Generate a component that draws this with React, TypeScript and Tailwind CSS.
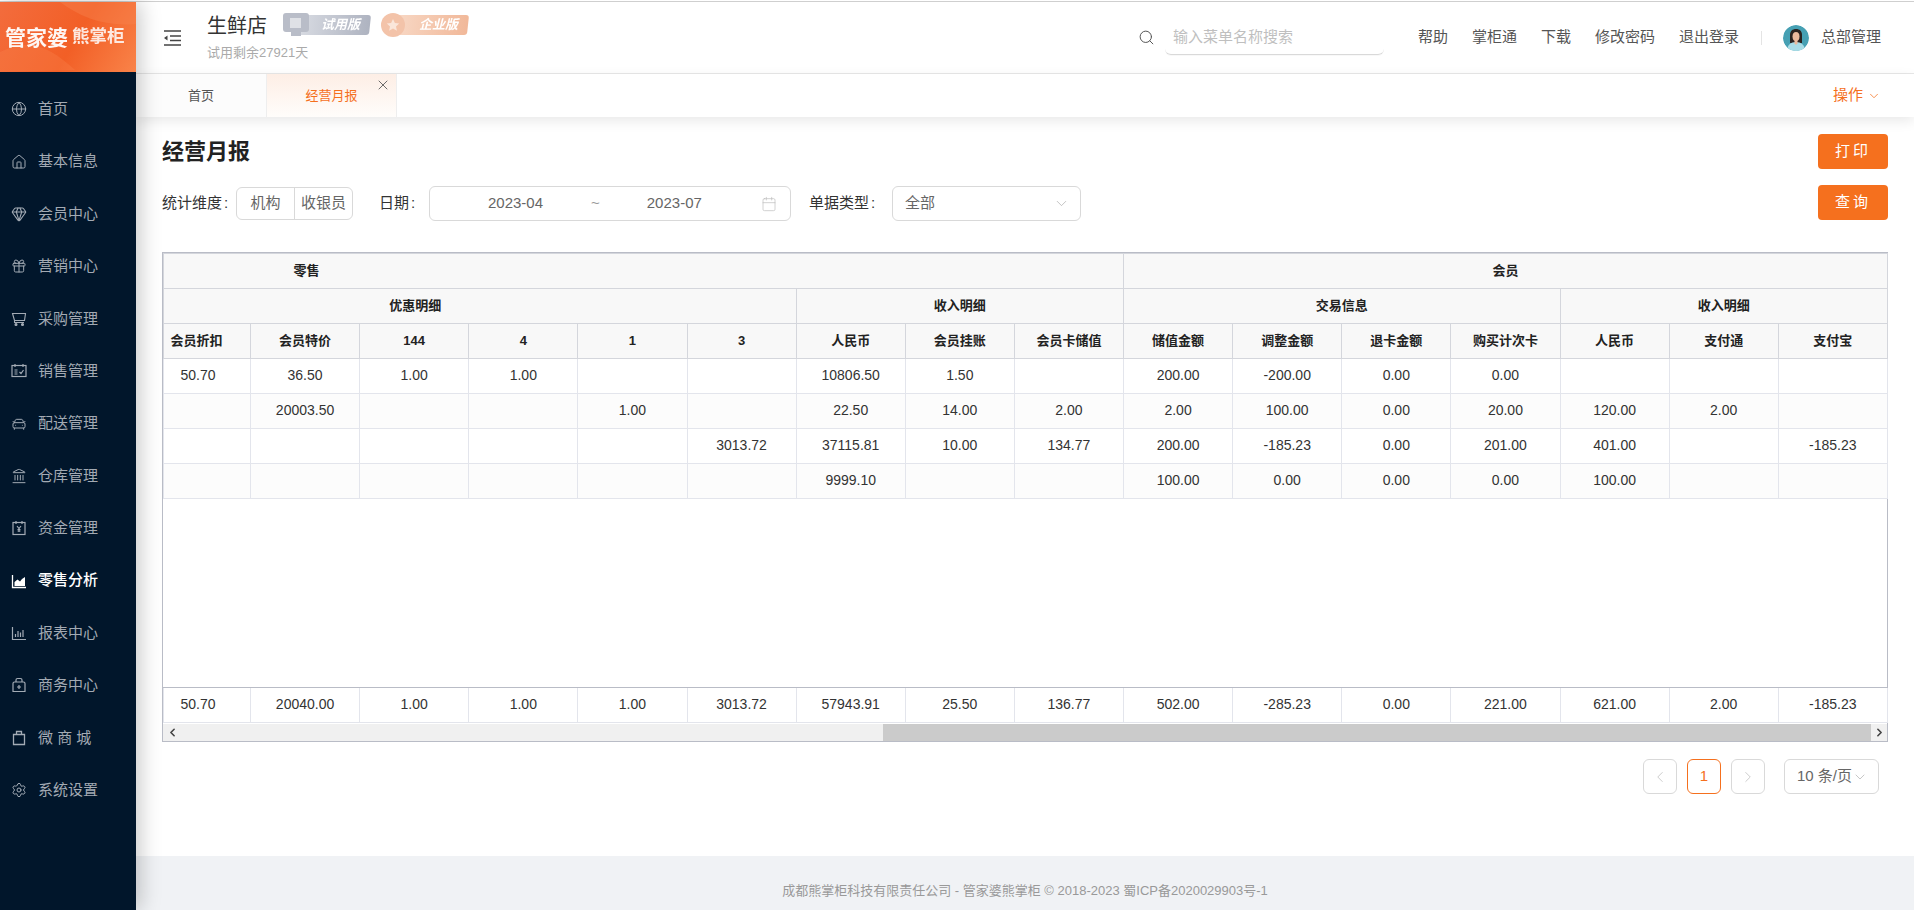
import { Calendar, CarFront, ChevronDown, ChevronLeft, ChevronRight, Gem, Gift, Globe, House, Landmark, Search, Settings, X } from 'lucide-react'
import type { ReactNode } from 'react'

const FONT = 'font-["Liberation_Sans","Noto_Sans_CJK_SC",sans-serif]'

function CartIcon() {
  return (
    <svg width="16" height="16" viewBox="0 0 16 16" fill="none" stroke="currentColor" strokeWidth="1.100">
      <path d="M1.500 2.500h13l-1 7h-10zM3.500 9.500v2h9.500" />
      <circle cx="5" cy="13.500" r="1" fill="currentColor" />
      <circle cx="11.500" cy="13.500" r="1" fill="currentColor" />
    </svg>
  )
}

function SalesIcon() {
  return (
    <svg width="16" height="16" viewBox="0 0 16 16" fill="none" stroke="currentColor" strokeWidth="1.200">
      <rect x="1" y="2.500" width="14" height="11" />
      <path d="M4 1v3M12 1v3M3.500 7h3M3.500 9h3M3.500 11h3M8.500 9l1.500 1.500L12.500 7" />
    </svg>
  )
}

function FundIcon() {
  return (
    <svg width="16" height="16" viewBox="0 0 16 16" fill="none" stroke="currentColor" strokeWidth="1.200">
      <rect x="2" y="2.500" width="12" height="12" />
      <path d="M5 1v3M11 1v3M6 6l2 2.500L10 6M8 8.500V12M6.500 9.500h3M6.500 11h3" />
    </svg>
  )
}

function AreaIcon() {
  return (
    <svg width="16" height="16" viewBox="0 0 16 16" fill="none">
      <path d="M1.500 2v12.500H15" stroke="currentColor" strokeWidth="1.300" />
      <path d="M3.500 13V9l3-2.500 2.500 2 2-2.500 3-2V13z" fill="currentColor" />
    </svg>
  )
}

function BarsIcon() {
  return (
    <svg width="16" height="16" viewBox="0 0 16 16" fill="none" stroke="currentColor" strokeWidth="1.200">
      <path d="M1.500 2v12.500H15M4.500 12V9M7 12V6M9.500 12V7.500M12 12V5" />
    </svg>
  )
}

function BusinessIcon() {
  return (
    <svg width="16" height="16" viewBox="0 0 16 16" fill="none" stroke="currentColor" strokeWidth="1.200">
      <path d="M2 6.500c0-1 .5-1.500 1.500-1.500h9c1 0 1.500.5 1.500 1.500V14.500H2zM5 5V3c0-.8.5-1.500 1.500-1.500h3c1 0 1.500.7 1.500 1.500v2M8 8v4M6 10h4" />
    </svg>
  )
}

function BagIcon() {
  return (
    <svg width="16" height="16" viewBox="0 0 16 16" fill="none" stroke="currentColor" strokeWidth="1.300">
      <path d="M2.500 4.500h11v10h-11zM5.500 4.500V1.500h5v3" />
    </svg>
  )
}

const menu: { label: string; icon: ReactNode; active?: boolean }[] = [
  { label: '首页', icon: <Globe size={16} strokeWidth={1.5} /> },
  { label: '基本信息', icon: <House size={16} strokeWidth={1.5} /> },
  { label: '会员中心', icon: <Gem size={16} strokeWidth={1.6} /> },
  { label: '营销中心', icon: <Gift size={16} strokeWidth={1.5} /> },
  { label: '采购管理', icon: <CartIcon /> },
  { label: '销售管理', icon: <SalesIcon /> },
  { label: '配送管理', icon: <CarFront size={16} strokeWidth={1.5} /> },
  { label: '仓库管理', icon: <Landmark size={16} strokeWidth={1.5} /> },
  { label: '资金管理', icon: <FundIcon /> },
  { label: '零售分析', icon: <AreaIcon />, active: true },
  { label: '报表中心', icon: <BarsIcon /> },
  { label: '商务中心', icon: <BusinessIcon /> },
  { label: '微 商 城', icon: <BagIcon /> },
  { label: '系统设置', icon: <Settings size={16} strokeWidth={1.5} /> },
]

const links = ['帮助', '掌柜通', '下载', '修改密码', '退出登录']

const subHeads = ['会员折扣', '会员特价', '144', '4', '1', '3', '人民币', '会员挂账', '会员卡储值', '储值金额', '调整金额', '退卡金额', '购买计次卡', '人民币', '支付通', '支付宝']

const rows = [
  ['50.70', '36.50', '1.00', '1.00', '', '', '10806.50', '1.50', '', '200.00', '-200.00', '0.00', '0.00', '', '', ''],
  ['', '20003.50', '', '', '1.00', '', '22.50', '14.00', '2.00', '2.00', '100.00', '0.00', '20.00', '120.00', '2.00', ''],
  ['', '', '', '', '', '3013.72', '37115.81', '10.00', '134.77', '200.00', '-185.23', '0.00', '201.00', '401.00', '', '-185.23'],
  ['', '', '', '', '', '', '9999.10', '', '', '100.00', '0.00', '0.00', '0.00', '100.00', '', ''],
]

const totals = ['50.70', '20040.00', '1.00', '1.00', '1.00', '3013.72', '57943.91', '25.50', '136.77', '502.00', '-285.23', '0.00', '221.00', '621.00', '2.00', '-185.23']

function Logo() {
  return (
    <div className="relative flex h-[70px] items-center overflow-hidden bg-[linear-gradient(120deg,#f36c3d,#f25f26_55%,#f98349)] pl-[5px] text-white">
      <svg className="absolute inset-0" width="136" height="70" viewBox="0 0 136 70" fill="none">
        <path d="M0 50C30 35 50 45 75 68L0 70z" fill="#f8814a" fillOpacity="0.35" />
        <path d="M60 0c20 15 45 25 76 22V0z" fill="#f88550" fillOpacity="0.4" />
      </svg>
      <span className="relative whitespace-nowrap text-[21px] leading-none font-bold opacity-95 blur-[0.3px]">管家婆</span>
      <span className="relative ml-[4px] whitespace-nowrap text-[17.500px] leading-none font-bold opacity-85 blur-[0.3px]">熊掌柜</span>
    </div>
  )
}

function Sidebar() {
  return (
    <aside className="relative z-20 w-[136px] shrink-0 bg-[#01162b] shadow-[4px_0_20px_rgba(0,0,0,0.22)]">
      <Logo />
      <nav className="pt-[11px]">
        {menu.map((m) => (
          <div key={m.label} className={`flex h-[52.400px] items-center gap-[11px] pl-[11px] text-[15px] ${m.active ? 'font-medium text-white' : 'text-[#a3aab3]'}`}>
            <span className={m.active ? 'text-white' : 'text-[#a3abb5]'}>{m.icon}</span>
            <span className="whitespace-pre">{m.label}</span>
          </div>
        ))}
      </nav>
    </aside>
  )
}

function Badge({ label, tone, icon }: { label: string; tone: string; icon: ReactNode }) {
  return (
    <div className="relative flex h-[24px] w-[87px] items-center blur-[0.6px]">
      <div className={`ml-[14px] flex h-[20px] w-[73px] -skew-x-6 items-center justify-center rounded-[3px] pl-[14px] text-[13px] font-bold text-white italic ${tone}`}>
        <span className="skew-x-6">{label}</span>
      </div>
      <div className="absolute top-0 left-0">{icon}</div>
    </div>
  )
}

function Avatar() {
  return (
    <svg width="26" height="26" viewBox="0 0 26 26" className="rounded-full">
      <circle cx="13" cy="13" r="13" fill="#46a0b3" />
      <path d="M7 18V10c0-4 2.500-6 6-6s6 2 6 6v8z" fill="#2b2320" />
      <ellipse cx="13" cy="11.500" rx="3.500" ry="4.500" fill="#eab99c" />
      <path d="M4 26c0-6 4-9 9-9s9 3 9 9z" fill="#a9dce6" />
      <path d="M11.500 15h3v3.500L13 20l-1.500-1.500z" fill="#eab99c" />
    </svg>
  )
}

function TopBar() {
  return (
    <header className="flex h-[72px] shrink-0 items-center border-b border-[#e8e8e8] bg-white pl-[27px]">
      <svg width="18" height="16" viewBox="0 0 18 16" fill="none" stroke="#444" strokeWidth="1.300">
        <path d="M1 1h17M7 6h11M7 10.500h11M1 15h17" />
        <path d="M4.500 5.500v5L1 8z" fill="#444" stroke="none" />
      </svg>
      <div className="ml-[26px] w-[76px] self-start pt-[12px]">
        <div className="whitespace-nowrap text-[20px] leading-[24px] text-[#333]">生鲜店</div>
        <div className="mt-[7px] whitespace-nowrap text-[13px] leading-[16px] text-[#aaa]">试用剩余27921天</div>
      </div>
      <div className="mb-[26px] flex gap-[11px]">
        <Badge
          label="试用版"
          tone="bg-[linear-gradient(90deg,#d9dce3,#aeb3c0)]"
          icon={
            <svg width="28" height="24" viewBox="0 0 28 24">
              <rect x="0" y="0" width="26" height="19" rx="3" fill="#b9bdc8" />
              <rect x="7" y="5" width="11" height="10" fill="#dfe1e6" />
              <rect x="8" y="19" width="10" height="4" fill="#b9bdc8" />
            </svg>
          }
        />
        <Badge
          label="企业版"
          tone="bg-[linear-gradient(90deg,#f8d8c5,#f1b899)]"
          icon={
            <svg width="24" height="24" viewBox="0 0 24 24">
              <circle cx="12" cy="12" r="12" fill="#f3c3a9" />
              <path d="M12 6l1.900 4 4.300.5-3.200 3 .9 4.300-3.900-2.200-3.900 2.200.9-4.300-3.200-3 4.300-.5z" fill="#fae6da" />
            </svg>
          }
        />
      </div>
      <div className="ml-auto flex items-center pr-[33px]">
        <Search size={17} strokeWidth={1.4} className="text-[#555]" />
        <div className="ml-[10px] flex h-[34px] w-[219px] items-center rounded-b-[6px] border-b border-[#d9d9d9] pl-[8px] text-[15px] text-[#bfbfbf] shadow-[0_1px_1px_rgba(0,0,0,0.03)]">
          输入菜单名称搜索
        </div>
        <div className="ml-[34px] flex gap-[24px] text-[15px] text-[#555]">
          {links.map((l) => (
            <span key={l} className="whitespace-nowrap">{l}</span>
          ))}
        </div>
        <div className="mr-[21px] ml-[22px] h-[14px] w-px bg-[#e4e4e4]" />
        <Avatar />
        <span className="ml-[12px] whitespace-nowrap text-[15px] text-[#555]">总部管理</span>
      </div>
    </header>
  )
}

function TabBar() {
  return (
    <div className="relative z-10 flex h-[43px] shrink-0 items-stretch bg-white shadow-[0_4px_12px_rgba(0,0,0,0.09)]">
      <div className="flex w-[131px] items-center justify-center border-r border-[#eee] bg-[#fcfcfc] text-[13px] text-[#555]">首页</div>
      <div className="relative flex w-[130px] items-center justify-center border-r border-[#eee] bg-[linear-gradient(180deg,#fdeee5,#fffdfb)] text-[13px] text-[#f5701e]">
        经营月报
        <X size={16} strokeWidth={1.3} className="absolute top-[3px] right-[5px] text-[#555]" />
      </div>
      <div className="ml-auto flex items-center gap-[4px] pr-[33px] text-[15px] text-[#f5701e]">
        操作
        <ChevronDown size={14} strokeWidth={1.3} />
      </div>
    </div>
  )
}

function Filters() {
  return (
    <div className="mt-[17px] flex h-[35px] items-center text-[15px] text-[#333]">
      <span className="w-[74px] whitespace-nowrap">统计维度<span className="ml-[2px]">:</span></span>
      <div className="flex h-[33px] w-[117px] rounded-[6px] border border-[#d9d9d9] text-[#666]">
        <span className="flex w-[58px] items-center justify-center border-r border-[#d9d9d9]">机构</span>
        <span className="flex flex-1 items-center justify-center whitespace-nowrap">收银员</span>
      </div>
      <span className="ml-[26px] w-[50px] whitespace-nowrap">日期<span className="ml-[2px]">:</span></span>
      <div className="flex h-[35px] w-[362px] items-center rounded-[6px] border border-[#d9d9d9] text-[#666]">
        <span className="ml-[58px] w-[56px]">2023-04</span>
        <span className="ml-[47px] text-[#999]">~</span>
        <span className="ml-[47px] w-[56px]">2023-07</span>
        <Calendar size={16} strokeWidth={1} className="ml-[58px] text-[#bbb]" />
      </div>
      <span className="ml-[18px] w-[83px] whitespace-nowrap">单据类型<span className="ml-[2px]">:</span></span>
      <div className="flex h-[35px] w-[189px] items-center justify-between rounded-[6px] border border-[#d9d9d9] pr-[10px] pl-[12px] text-[#666]">
        全部
        <ChevronDown size={17} strokeWidth={1} className="text-[#aaa]" />
      </div>
    </div>
  )
}

function HeadCell({ span, pr, children }: { span?: number; pr?: string; children: ReactNode }) {
  return (
    <th colSpan={span} className={`h-[35px] border border-[#d4d6dc] bg-[#f8f8f8] p-0 pb-px text-center text-[13px] font-bold text-[#222] ${pr ?? ''}`}>
      {children}
    </th>
  )
}

function DataTable() {
  return (
    <div className="mt-[31px] w-[1726px] border border-[#b9bcc6] bg-white">
      <table className="w-full table-fixed border-collapse">
        <colgroup>
          <col className="w-[87px]" />
          {subHeads.slice(1).map((h, i) => (
            <col key={i} className="w-[109.130px]" />
          ))}
        </colgroup>
        <thead>
          <tr>
            <HeadCell span={9} pr="pr-[674px]">零售</HeadCell>
            <HeadCell span={7}>会员</HeadCell>
          </tr>
          <tr>
            <HeadCell span={6} pr="pr-[129px]">优惠明细</HeadCell>
            <HeadCell span={3}>收入明细</HeadCell>
            <HeadCell span={4}>交易信息</HeadCell>
            <HeadCell span={3}>收入明细</HeadCell>
          </tr>
          <tr>
            {subHeads.map((h, i) => (
              <HeadCell key={i} pr={i === 0 ? 'pr-[21px]' : ''}>{h}</HeadCell>
            ))}
          </tr>
        </thead>
        <tbody>
          {rows.map((r, i) => (
            <tr key={i} className={i % 2 ? 'bg-[#fcfcfc]' : 'bg-white'}>
              {r.map((v, j) => (
                <td key={j} className={`h-[35px] border border-[#e3e5ec] p-0 pb-px text-center text-[14px] text-[#333] ${j === 0 ? 'pr-[18px]' : ''}`}>{v}</td>
              ))}
            </tr>
          ))}
          <tr>
            <td colSpan={16} className="h-[189px] border-b border-[#b9bcc6] p-0" />
          </tr>
          <tr>
            {totals.map((v, j) => (
              <td key={j} className={`h-[35px] border-x border-b border-[#e3e5ec] p-0 pb-px text-center text-[14px] text-[#333] ${j === 0 ? 'pr-[18px]' : ''}`}>{v}</td>
            ))}
          </tr>
        </tbody>
      </table>
      <div className="mt-px flex h-[17px] bg-[#f0f0f0] text-[#444]">
        <span className="flex w-[18px] items-center justify-center"><ChevronLeft size={13} strokeWidth={3} /></span>
        <div className="ml-[702px] h-full w-[988px] bg-[#cbcbcb]" />
        <span className="flex flex-1 items-center justify-center"><ChevronRight size={13} strokeWidth={3} /></span>
      </div>
    </div>
  )
}

function Pager() {
  return (
    <div className="mt-[17px] flex h-[35px] justify-end gap-[10px] pr-[9px] text-[15px]">
      <span className="flex w-[34px] items-center justify-center rounded-[6px] border border-[#d9d9d9] text-[#bbb]"><ChevronLeft size={18} strokeWidth={1} /></span>
      <span className="flex w-[34px] items-center justify-center rounded-[6px] border border-[#f5701e] text-[#f5701e]">1</span>
      <span className="flex w-[34px] items-center justify-center rounded-[6px] border border-[#d9d9d9] text-[#bbb]"><ChevronRight size={18} strokeWidth={1} /></span>
      <span className="ml-[9px] flex w-[95px] items-center rounded-[6px] border border-[#d9d9d9] pl-[12px] whitespace-nowrap text-[#666]">
        10 条/页
        <ChevronDown size={16} strokeWidth={1} className="text-[#aaa]" />
      </span>
    </div>
  )
}

export default function App() {
  return (
    <div className={`flex h-[910px] w-[1914px] flex-col overflow-hidden bg-white ${FONT}`}>
      <div className="h-[2px] shrink-0 border-b border-[#cfcfcf]" />
      <div className="flex min-h-0 flex-1">
        <Sidebar />
        <div className="flex min-w-0 flex-1 flex-col">
          <TopBar />
          <TabBar />
          <main className="flex-1 px-[26px] pt-[17px]">
            <div className="flex justify-between">
              <div>
                <h1 className="flex h-[35px] items-center text-[22px] font-bold text-[#222]">经营月报</h1>
                <Filters />
              </div>
              <div className="flex flex-col gap-[16px]">
                <button type="button" className="h-[35px] w-[70px] rounded-[4px] bg-[#f5701e] text-[15px] tracking-[3px] text-white">打印</button>
                <button type="button" className="h-[35px] w-[70px] rounded-[4px] bg-[#f5701e] text-[15px] tracking-[3px] text-white">查询</button>
              </div>
            </div>
            <DataTable />
            <Pager />
          </main>
          <footer className="flex h-[54px] shrink-0 items-center justify-center bg-[#f0f2f5] pt-[16px] text-[13px] text-[#999]">
            成都熊掌柜科技有限责任公司 - 管家婆熊掌柜 © 2018-2023 蜀ICP备2020029903号-1
          </footer>
        </div>
      </div>
    </div>
  )
}
